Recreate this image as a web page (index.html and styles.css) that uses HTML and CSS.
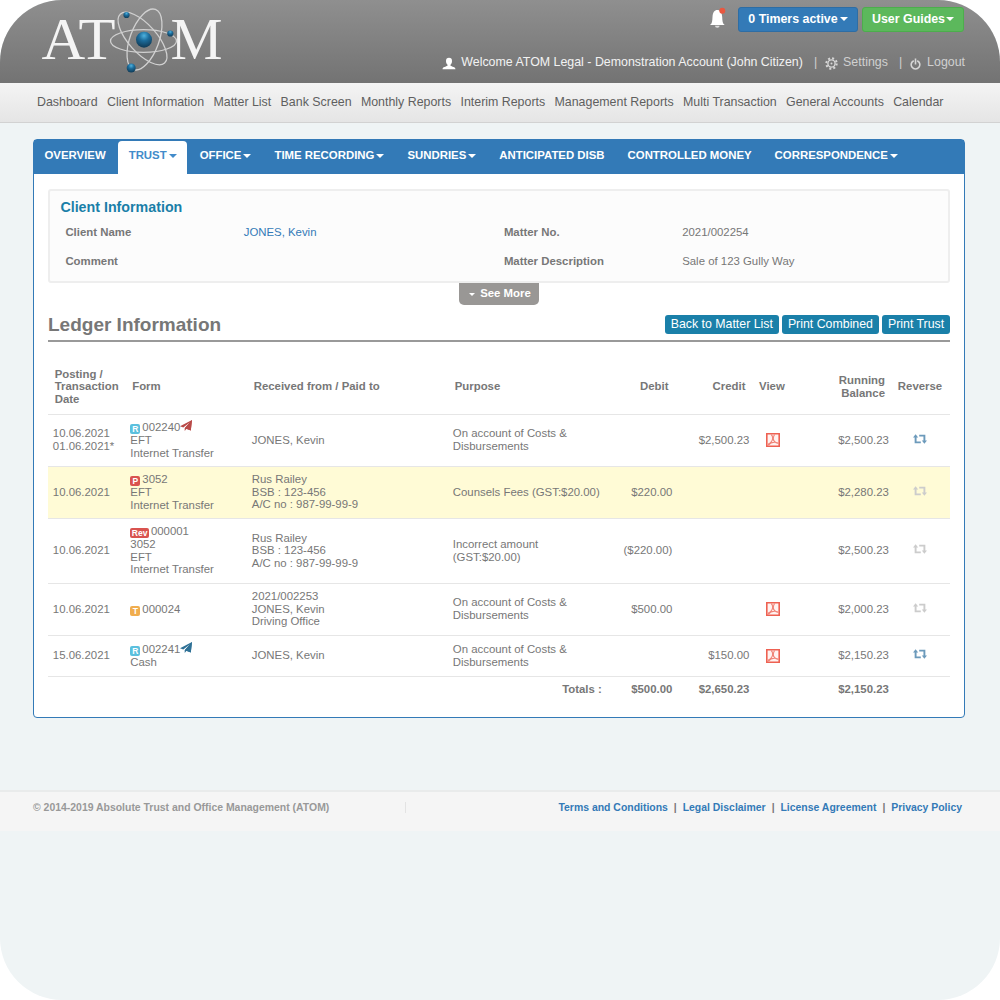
FILE: index.html
```
<!DOCTYPE html>
<html lang="en">
<head>
    <meta charset="UTF-8">
    <meta name="viewport" content="width=device-width, initial-scale=1.0">
    <title>ATOM - Ledger Information</title>
    <link rel="stylesheet" href="styles.css">
</head>
<body>
    <!-- shared icons -->
    <svg class="sprite" width="0" height="0">
        <symbol id="pdf" viewBox="0 0 14 14">
            <path d="M.8.8h12.4v12.4H.8z" fill="#fff3f1" stroke="#ee6152" stroke-width="1.600"/>
            <path d="M5.300 1.500c1.400 1.500 1.600 3 1.300 4.500C6.200 8 4.500 10 1.800 11.400M8.600 1.500c-1 1.500-1.300 2.500-1.300 4 0 2 2 4.200 5.200 5M2.200 12.300C4.500 9.500 8 8.500 12.200 10" fill="none" stroke="#f08478" stroke-width="1.200"/>
        </symbol>
        <symbol id="retweet" viewBox="0 0 14 10">
            <path d="M2.600 2.500v5.900h5.200M11.400 7.500V1.600H6.200" fill="none" stroke="currentColor" stroke-width="1.900"/>
            <path d="M2.600.3 5.200 3.600H0zM11.400 9.700 14 6.400H8.800z" fill="currentColor"/>
        </symbol>
        <symbol id="plane" viewBox="0 0 12 11">
            <path d="M12 0 0 6.300l3.300 1.200L10 2.300 4.700 8.200V11l1.800-2.200L10.800 10.500z" fill="currentColor"/>
            <path d="M10 2.300 4.700 8.200l6.100 2.300L12 0z" fill="currentColor"/>
        </symbol>
    </svg>

    <div class="page">
        <header class="header">
            <svg class="logo" width="184" height="72" viewBox="40 4 184 72">
                <defs>
                    <radialGradient id="ball" cx="50%" cy="25%" r="70%">
                        <stop offset="0" stop-color="#4fb2de"/>
                        <stop offset=".45" stop-color="#1c6c9b"/>
                        <stop offset="1" stop-color="#123f5c"/>
                    </radialGradient>
                </defs>
                <g class="logo-text">
                    <text x="41.500" y="58.500" textLength="74" lengthAdjust="spacingAndGlyphs">AT</text>
                    <text x="170.500" y="58.500" textLength="52" lengthAdjust="spacingAndGlyphs">M</text>
                </g>
                <g fill="none" stroke="#d0d0d0" stroke-width="1.300">
                    <ellipse cx="143.500" cy="41" rx="33" ry="11.300"/>
                    <ellipse cx="144.500" cy="39.500" rx="32" ry="14.500" transform="rotate(110 144.500 39.500)"/>
                    <ellipse cx="142.500" cy="38.500" rx="33" ry="14" transform="rotate(48 142.500 38.500)"/>
                </g>
                <g fill="url(#ball)">
                    <circle cx="144" cy="39.700" r="8"/>
                    <circle cx="126.500" cy="15" r="3.100"/>
                    <circle cx="170.300" cy="33.500" r="3.100"/>
                    <circle cx="131.200" cy="68" r="4.500"/>
                </g>
            </svg>

            <div class="header-right">
                <div class="header-buttons">
                    <svg class="bell" width="18" height="22" viewBox="0 0 18 22">
                        <path d="M1 18c2.200-1.500 2.300-4 2.500-8C3.700 5.500 5.500 3 8.300 3s4.700 2.500 4.900 7c.2 4 .3 6.500 2.500 8z" fill="#fff"/>
                        <path d="M6 18.800h4.600a2.300 2 0 0 1-4.600 0z" fill="#ddd"/>
                        <circle cx="13.300" cy="3.800" r="3" fill="#e9573f"/>
                    </svg>
                    <button class="btn btn-blue">0 Timers active<span class="caret"></span></button>
                    <button class="btn btn-green">User Guides<span class="caret"></span></button>
                </div>
                <div class="user-bar">
                    <svg class="user-icon" width="14" height="13" viewBox="0 0 14 13">
                        <path d="M7 .8C9 .8 10 2 10 4c0 1.600-.6 2.900-1.500 3.700v1c1.300.9 5 1.200 5 3.500H.5c0-2.300 3.700-2.600 5-3.500v-1C4.600 6.900 4 5.600 4 4 4 2 5 .8 7 .8z" fill="#fff"/>
                    </svg>
                    <span class="welcome">Welcome ATOM Legal - Demonstration Account (John Citizen)</span>
                    <span class="bar">|</span>
                    <svg class="gear-icon" width="13" height="13" viewBox="0 0 13 13" fill="none" stroke="#d6d6d6">
                        <circle cx="6.500" cy="6.500" r="5.200" stroke-width="2" stroke-dasharray="2.040 2.040"/>
                        <circle cx="6.500" cy="6.500" r="3.600" stroke-width="1.400"/>
                        <circle cx="6.500" cy="6.500" r="1" fill="#d6d6d6" stroke="none"/>
                    </svg>
                    <a href="#">Settings</a>
                    <span class="bar">|</span>
                    <svg class="power-icon" width="11" height="12" viewBox="0 0 11 12" fill="none" stroke="#d6d6d6" stroke-width="1.600">
                        <path d="M3.800 2.700a4.300 4.300 0 1 0 3.400 0M5.500.5v6"/>
                    </svg>
                    <a href="#">Logout</a>
                </div>
            </div>
        </header>

        <nav class="main-nav">
            <a href="#">Dashboard</a>
            <a href="#">Client Information</a>
            <a href="#">Matter List</a>
            <a href="#">Bank Screen</a>
            <a href="#">Monthly Reports</a>
            <a href="#">Interim Reports</a>
            <a href="#">Management Reports</a>
            <a href="#">Multi Transaction</a>
            <a href="#">General Accounts</a>
            <a href="#">Calendar</a>
        </nav>

        <main class="panel">
            <ul class="tabs">
                <li>OVERVIEW</li>
                <li class="active">TRUST<span class="caret"></span></li>
                <li>OFFICE<span class="caret"></span></li>
                <li>TIME RECORDING<span class="caret"></span></li>
                <li>SUNDRIES<span class="caret"></span></li>
                <li>ANTICIPATED DISB</li>
                <li>CONTROLLED MONEY</li>
                <li>CORRESPONDENCE<span class="caret"></span></li>
            </ul>

            <div class="content">
                <section class="client-box">
                    <h2>Client Information</h2>
                    <dl class="client-grid">
                        <dt>Client Name</dt>
                        <dd><a href="#">JONES, Kevin</a></dd>
                        <dt>Matter No.</dt>
                        <dd>2021/002254</dd>
                        <dt>Comment</dt>
                        <dd></dd>
                        <dt>Matter Description</dt>
                        <dd>Sale of 123 Gully Way</dd>
                    </dl>
                </section>
                <button class="see-more"><span class="caret"></span>See More</button>

                <div class="ledger-head">
                    <h1>Ledger Information</h1>
                    <div class="ledger-buttons">
                        <button>Back to Matter List</button>
                        <button>Print Combined</button>
                        <button>Print Trust</button>
                    </div>
                </div>

                <table class="ledger">
                    <colgroup>
                        <col class="c-date"><col class="c-form"><col class="c-from"><col class="c-purpose"><col class="c-debit"><col class="c-credit"><col class="c-view"><col class="c-balance"><col class="c-reverse">
                    </colgroup>
                    <thead>
                        <tr>
                            <th>Posting /<br>Transaction<br>Date</th>
                            <th>Form</th>
                            <th>Received from / Paid to</th>
                            <th>Purpose</th>
                            <th class="num">Debit</th>
                            <th class="num">Credit</th>
                            <th>View</th>
                            <th class="num">Running<br>Balance</th>
                            <th class="mid">Reverse</th>
                        </tr>
                    </thead>
                    <tbody>
                        <tr class="lines-3">
                            <td>10.06.2021<br>01.06.2021*</td>
                            <td><span class="tag tag-r">R</span>002240<svg class="plane red"><use href="#plane"/></svg><br>EFT<br>Internet Transfer</td>
                            <td>JONES, Kevin</td>
                            <td>On account of Costs &amp;<br>Disbursements</td>
                            <td></td>
                            <td class="num">$2,500.23</td>
                            <td class="mid"><svg class="pdf"><use href="#pdf"/></svg></td>
                            <td class="num">$2,500.23</td>
                            <td class="mid"><svg class="reverse on"><use href="#retweet"/></svg></td>
                        </tr>
                        <tr class="lines-3 highlight">
                            <td>10.06.2021</td>
                            <td><span class="tag tag-p">P</span>3052<br>EFT<br>Internet Transfer</td>
                            <td>Rus Railey<br>BSB : 123-456<br>A/C no : 987-99-99-9</td>
                            <td>Counsels Fees (GST:$20.00)</td>
                            <td class="num">$220.00</td>
                            <td></td>
                            <td></td>
                            <td class="num">$2,280.23</td>
                            <td class="mid"><svg class="reverse"><use href="#retweet"/></svg></td>
                        </tr>
                        <tr class="lines-4">
                            <td>10.06.2021</td>
                            <td><span class="tag tag-p">Rev</span>000001<br>3052<br>EFT<br>Internet Transfer</td>
                            <td>Rus Railey<br>BSB : 123-456<br>A/C no : 987-99-99-9</td>
                            <td>Incorrect amount<br>(GST:$20.00)</td>
                            <td class="num">($220.00)</td>
                            <td></td>
                            <td></td>
                            <td class="num">$2,500.23</td>
                            <td class="mid"><svg class="reverse"><use href="#retweet"/></svg></td>
                        </tr>
                        <tr class="lines-3">
                            <td>10.06.2021</td>
                            <td><span class="tag tag-t">T</span>000024</td>
                            <td>2021/002253<br>JONES, Kevin<br>Driving Office</td>
                            <td>On account of Costs &amp;<br>Disbursements</td>
                            <td class="num">$500.00</td>
                            <td></td>
                            <td class="mid"><svg class="pdf"><use href="#pdf"/></svg></td>
                            <td class="num">$2,000.23</td>
                            <td class="mid"><svg class="reverse"><use href="#retweet"/></svg></td>
                        </tr>
                        <tr class="lines-2">
                            <td>15.06.2021</td>
                            <td><span class="tag tag-r">R</span>002241<svg class="plane blue"><use href="#plane"/></svg><br>Cash</td>
                            <td>JONES, Kevin</td>
                            <td>On account of Costs &amp;<br>Disbursements</td>
                            <td></td>
                            <td class="num">$150.00</td>
                            <td class="mid"><svg class="pdf"><use href="#pdf"/></svg></td>
                            <td class="num">$2,150.23</td>
                            <td class="mid"><svg class="reverse on"><use href="#retweet"/></svg></td>
                        </tr>
                    </tbody>
                    <tfoot>
                        <tr>
                            <td class="num" colspan="4">Totals :</td>
                            <td class="num">$500.00</td>
                            <td class="num">$2,650.23</td>
                            <td></td>
                            <td class="num">$2,150.23</td>
                            <td></td>
                        </tr>
                    </tfoot>
                </table>
            </div>
        </main>

        <footer class="footer">
            <div class="copyright">© 2014-2019 Absolute Trust and Office Management (ATOM)</div>
            <div class="footer-links">
                <a href="#">Terms and Conditions</a><span>|</span>
                <a href="#">Legal Disclaimer</a><span>|</span>
                <a href="#">License Agreement</a><span>|</span>
                <a href="#">Privacy Policy</a>
            </div>
        </footer>
    </div>
</body>
</html>
```
FILE: styles.css
```
* {
    box-sizing: border-box;
    margin: 0;
    padding: 0;
}

body {
    background: #fff;
    font-family: "Liberation Sans", Arial, sans-serif;
    font-size: 11.4px;
    color: #777;
}

a {
    color: #337ab7;
    text-decoration: none;
}

button {
    font-family: inherit;
    border: none;
    white-space: nowrap;
}

.sprite {
    display: none;
}

.page {
    width: 1000px;
    height: 1000px;
    background: #eff4f5;
    border-radius: 62px;
    overflow: hidden;
}

.caret {
    display: inline-block;
    border-top: 4px solid currentColor;
    border-left: 4px solid transparent;
    border-right: 4px solid transparent;
    margin-left: 2px;
    vertical-align: 1px;
}

/* header */
.header {
    height: 83px;
    display: flex;
    justify-content: space-between;
    padding: 4px 35px 0 40px;
    background: linear-gradient(#8f8f8f, #737373);
}

.logo-text {
    font-family: "Liberation Serif", serif;
    font-size: 59px;
    fill: #f4f4f4;
}

.header-right {
    display: flex;
    flex-direction: column;
    align-items: flex-end;
}

.header-buttons {
    display: flex;
    align-items: flex-start;
    padding-top: 3px;
    margin-right: 1px;
    gap: 4px;
}

.bell {
    margin-right: 7px;
}

.btn {
    height: 25px;
    padding: 0 0 2px;
    border-radius: 3px;
    font-size: 12.4px;
    font-weight: bold;
    color: #fff;
}

.btn .caret {
    border-width: 4px 4px 0;
    margin-left: 2px;
    vertical-align: 2px;
}

.btn-blue {
    width: 120px;
    background: #337ab7;
    border: 1px solid #2e6da4;
}

.btn-green {
    width: 102px;
    background: #5cb85c;
    border: 1px solid #4cae4c;
}

.btn-green .caret {
    margin-left: 1px;
}

.user-bar {
    display: flex;
    align-items: center;
    height: 16px;
    margin-top: 22px;
    font-size: 12.4px;
    color: #f2f2f2;
    white-space: nowrap;
}

.user-bar a,
.bar {
    color: #d0d0d0;
}

.user-icon {
    margin: 3px 5px 0 0;
}

.bar {
    margin: 0 8px 0 11px;
}

.gear-icon {
    margin: 3px 5px 0 0;
}

.power-icon {
    margin: 3px 6px 0 0;
}

/* main menu */
.main-nav {
    height: 40px;
    display: flex;
    align-items: center;
    gap: 9.35px;
    padding: 0 37px 1px;
    background: linear-gradient(#f4f4f4, #e5e5e5);
    border-bottom: 1px solid #d2d2d2;
    font-size: 12.4px;
    white-space: nowrap;
}

.main-nav a {
    color: #5f5f5f;
}

/* panel */
.panel {
    width: 932px;
    height: 579px;
    margin: 16px 0 0 33px;
    background: #fff;
    border: 1px solid #337ab7;
    border-radius: 4px;
}

.tabs {
    display: flex;
    gap: 2px;
    height: 34px;
    background: #337ab7;
    list-style: none;
    font-weight: bold;
    color: #fff;
}

.tabs li {
    height: 33px;
    margin-top: 1px;
    padding: 0 10.5px;
    line-height: 29px;
    white-space: nowrap;
}

.tabs .active {
    background: #fff;
    color: #428bca;
    border-radius: 4px 4px 0 0;
}

.content {
    padding: 15px 14px 0;
}

.client-box {
    height: 94px;
    border: 2px solid #eee;
    border-radius: 3px;
    background: #fcfcfc;
    padding: 8px 10.4px;
}

.client-box h2 {
    font-size: 14.25px;
    line-height: 17px;
    color: #1a7fa8;
}

.client-grid {
    display: grid;
    grid-template-columns: 178.3px 260.2px 178.3px 1fr;
    grid-auto-rows: 28.5px;
    padding-left: 5px;
    line-height: 32px;
}

.client-grid dt {
    font-weight: bold;
}

.see-more {
    display: block;
    width: 80px;
    height: 22px;
    margin-left: 411px;
    padding: 0 0 2px 2px;
    background: #999795;
    border-radius: 0 0 5px 5px;
    color: #fff;
    font-size: 11.4px;
    font-weight: bold;
}

.see-more .caret {
    border-width: 3px 3px 0;
    margin: 0 5px 0 0;
}

.ledger-head {
    display: flex;
    justify-content: space-between;
    height: 37px;
    border-bottom: 2px solid #999;
}

.ledger-head h1 {
    font-size: 19px;
    line-height: 40px;
}

.ledger-buttons {
    display: flex;
    gap: 3.4px;
    padding-top: 10px;
}

.ledger-buttons button {
    height: 19px;
    padding: 0 5.8px 2px;
    border-radius: 3px;
    background: #1a80a9;
    color: #fff;
    font-size: 12.35px;
}

/* ledger table */
.ledger {
    width: 902px;
    margin-top: 18px;
    border-collapse: collapse;
    table-layout: fixed;
    line-height: 12.6px;
    white-space: nowrap;
}

.c-date { width: 77.5px; }
.c-form { width: 121.5px; }
.c-from { width: 201px; }
.c-purpose { width: 158px; }
.c-debit { width: 70.5px; }
.c-credit { width: 77px; }
.c-view { width: 38.5px; }
.c-balance { width: 101px; }
.c-reverse { width: 57px; }

.ledger th {
    height: 54px;
    padding: 0 6.7px;
    text-align: left;
}

.ledger th:nth-child(7) {
    padding-left: 5.5px;
}

.ledger td {
    padding: 0 4.2px 0 4.8px;
}

.ledger tbody tr {
    border-top: 1px solid #e6e6e6;
}

.ledger tfoot tr {
    height: 26px;
    border-top: 1px solid #e6e6e6;
    font-weight: bold;
}

.ledger .num {
    text-align: right;
}

.ledger th.num {
    padding-right: 8px;
}

.ledger .mid {
    text-align: center;
    padding: 0;
}

.ledger .mid:last-child {
    padding-right: 3px;
}

.lines-2 { height: 41px; }
.lines-3 { height: 52px; }
.lines-4 { height: 65px; }

.highlight {
    background: #fffbd6;
}

.tag {
    display: inline-block;
    height: 10px;
    min-width: 10px;
    margin-right: 2px;
    padding: 0 1.5px;
    border-radius: 2px;
    color: #fff;
    font-size: 8.5px;
    font-weight: bold;
    line-height: 10px;
    text-align: center;
    vertical-align: -1px;
}

.tag-r { background: #5bc0de; }
.tag-p { background: #d9534f; }
.tag-t { background: #f0ad4e; }

.plane {
    width: 12px;
    height: 11px;
    vertical-align: 0;
}

.red { color: #b94a48; }
.blue { color: #2f7196; }

.pdf {
    display: inline-block;
    width: 14px;
    height: 14px;
    vertical-align: middle;
}

.reverse {
    width: 14px;
    height: 10px;
    margin-bottom: 3px;
    vertical-align: middle;
    color: #ccc;
}

.reverse.on {
    color: #6c9abb;
}

/* footer */
.footer {
    height: 41px;
    margin-top: 72px;
    padding: 0 38px 9px 33px;
    display: flex;
    align-items: center;
    background: #f5f5f5;
    border-top: 2px solid #e9ebeb;
    font-size: 10.45px;
    font-weight: bold;
    white-space: nowrap;
}

.copyright {
    width: 373px;
    line-height: 11px;
    color: #999;
    border-right: 1px solid #e3e3e3;
}

.footer-links {
    margin-left: auto;
}

.footer-links span {
    margin: 0 3px 0 6px;
}
```
